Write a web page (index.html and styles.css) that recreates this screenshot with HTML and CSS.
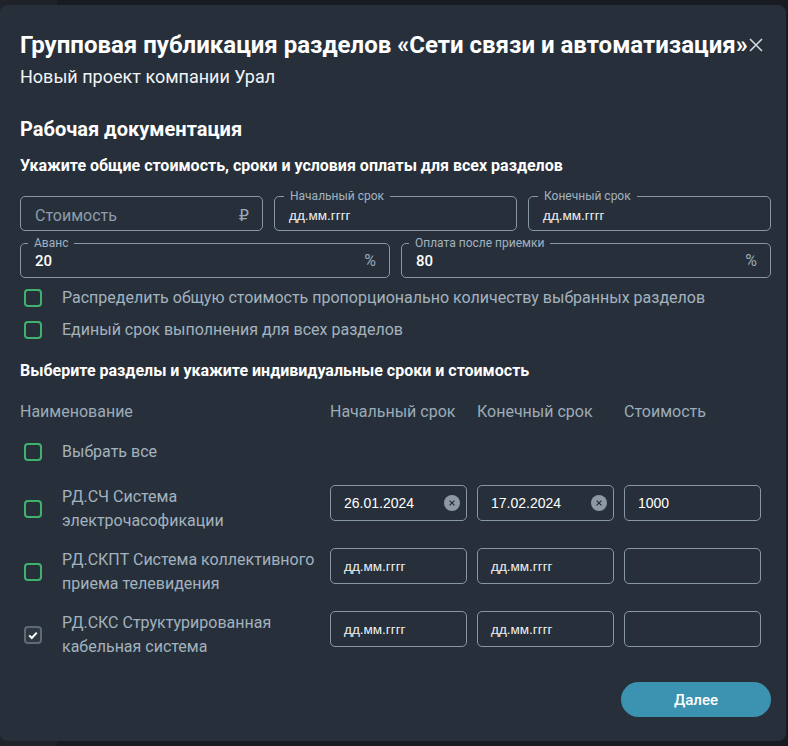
FILE: index.html
```html
<!DOCTYPE html>
<html lang="ru">
<head>
<meta charset="utf-8">
<title>Групповая публикация</title>
<link rel="stylesheet" href="styles.css">
</head>
<body>
<div class="modal">
  <div class="head">
    <h1 class="title">Групповая публикация разделов «Сети связи и автоматизация»</h1>
    <button class="close" aria-label="Закрыть">
      <svg width="14" height="14" viewBox="0 0 14 14"><path d="M1 1 L13 13 M13 1 L1 13" stroke="#d3d9de" stroke-width="1.6" fill="none"/></svg>
    </button>
  </div>
  <p class="subtitle">Новый проект компании Урал</p>
  <h2 class="section">Рабочая документация</h2>
  <h3 class="hint">Укажите общие стоимость, сроки и условия оплаты для всех разделов</h3>

  <div class="fields">
    <div class="row3">
      <div class="field"><span class="ph">Стоимость</span><span class="suffix rub">₽</span></div>
      <div class="field"><span class="legend">Начальный срок</span><span class="date">дд.мм.гггг</span></div>
      <div class="field"><span class="legend">Конечный срок</span><span class="date">дд.мм.гггг</span></div>
    </div>
    <div class="row2">
      <div class="field"><span class="legend">Аванс</span><span class="val">20</span><span class="suffix">%</span></div>
      <div class="field"><span class="legend">Оплата после приемки</span><span class="val">80</span><span class="suffix">%</span></div>
    </div>
  </div>

  <div class="options">
    <label class="opt"><span class="cb"></span><span>Распределить общую стоимость пропорционально количеству выбранных разделов</span></label>
    <label class="opt"><span class="cb"></span><span>Единый срок выполнения для всех разделов</span></label>
  </div>

  <h3 class="hint hint2">Выберите разделы и укажите индивидуальные сроки и стоимость</h3>

  <div class="table">
    <div class="trow thead">
      <div>Наименование</div>
      <div>Начальный срок</div>
      <div>Конечный срок</div>
      <div>Стоимость</div>
    </div>
    <div class="trow tall">
      <div class="name"><span class="cb"></span><span>Выбрать все</span></div>
    </div>
    <div class="trow titem first">
      <div class="name"><span class="cb"></span><span class="ntext">РД.СЧ Система<br>электрочасофикации</span></div>
      <div class="inp"><span class="v">26.01.2024</span><span class="clr"><svg width="16" height="16" viewBox="0 0 16 16"><circle cx="8" cy="8" r="8" fill="#8c99a4"/><path d="M5.6 5.6 L10.4 10.4 M10.4 5.6 L5.6 10.4" stroke="#27303a" stroke-width="1.3"/></svg></span></div>
      <div class="inp"><span class="v">17.02.2024</span><span class="clr"><svg width="16" height="16" viewBox="0 0 16 16"><circle cx="8" cy="8" r="8" fill="#8c99a4"/><path d="M5.6 5.6 L10.4 10.4 M10.4 5.6 L5.6 10.4" stroke="#27303a" stroke-width="1.3"/></svg></span></div>
      <div class="inp"><span class="v">1000</span></div>
    </div>
    <div class="trow titem">
      <div class="name"><span class="cb"></span><span class="ntext">РД.СКПТ Система коллективного<br>приема телевидения</span></div>
      <div class="inp"><span class="d">дд.мм.гггг</span></div>
      <div class="inp"><span class="d">дд.мм.гггг</span></div>
      <div class="inp"></div>
    </div>
    <div class="trow titem">
      <div class="name"><span class="cb checked"><svg width="14" height="14" viewBox="0 0 14 14"><path d="M3.2 7.4 L5.8 10 L10.8 4.6" stroke="#ffffff" stroke-width="2" fill="none"/></svg></span><span class="ntext">РД.СКС Структурированная<br>кабельная система</span></div>
      <div class="inp"><span class="d">дд.мм.гггг</span></div>
      <div class="inp"><span class="d">дд.мм.гггг</span></div>
      <div class="inp"></div>
    </div>
  </div>

  <div class="footer">
    <button class="next">Далее</button>
  </div>
</div>
</body>
</html>
```

FILE: styles.css
```css
* { box-sizing: border-box; }

body {
  margin: 0;
  background: linear-gradient(to right, #1f2329 0, #1f2329 57px, #181c22 57px);
  font-family: Roboto, "Liberation Sans", sans-serif;
  height: 746px;
  overflow: hidden;
}

.modal {
  margin-top: 5px;
  width: 786px;
  height: 736px;
  background: #27303a;
  border-radius: 8px;
  padding: 26px 15px 0 20px;
  color: #ffffff;
}

.head {
  display: flex;
  align-items: center;
}

.title {
  margin: 0;
  font-size: 24px;
  line-height: 28px;
  font-weight: 700;
  white-space: nowrap;
  letter-spacing: 0;
}

.close {
  border: 0;
  background: none;
  padding: 0;
  margin-left: 1px;
  width: 14px;
  height: 14px;
  display: flex;
  cursor: pointer;
}

.subtitle {
  margin: 7px 0 0;
  font-size: 18px;
  line-height: 22px;
  color: #f2f4f6;
}

.section {
  margin: 29px 0 0;
  font-size: 20px;
  line-height: 24px;
  font-weight: 700;
}

.hint {
  margin: 15px 0 0;
  font-size: 16px;
  line-height: 20px;
  font-weight: 700;
}

.hint2 { margin-top: 19px; }

.fields {
  margin-top: 20px;
  display: flex;
  flex-direction: column;
  gap: 12px;
}

.row3 {
  display: grid;
  grid-template-columns: 243px 243px 243px;
  column-gap: 11px;
}

.row2 {
  display: grid;
  grid-template-columns: 370px 370px;
  column-gap: 11px;
}

.field {
  position: relative;
  height: 35px;
  border: 1px solid #8797a6;
  border-radius: 5px;
  display: flex;
  align-items: center;
  padding: 0 13px 0 14px;
}

.row3 .field { padding-top: 3px; }

.legend {
  position: absolute;
  top: -8px;
  left: 9px;
  padding: 0 6px;
  background: #27303a;
  font-size: 12px;
  line-height: 14px;
  color: #a2b2c1;
}

.row2 .legend { left: 7px; }

.ph {
  font-size: 16px;
  color: #8e9cab;
}

.date {
  font-family: "Liberation Sans", Arial, sans-serif;
  font-size: 13.5px;
  color: #eef1f3;
}

.val {
  font-size: 15px;
  font-weight: 500;
  color: #ffffff;
}

.suffix {
  margin-left: auto;
  font-size: 16px;
  color: #9aa8b5;
}

.rub {
  font-family: "DejaVu Sans", sans-serif;
  font-size: 16px;
}

.options {
  margin-top: 8px;
  display: flex;
  flex-direction: column;
  gap: 8px;
}

.opt {
  display: flex;
  align-items: center;
  gap: 20px;
  font-size: 16px;
  line-height: 24px;
  color: #a3b2bf;
}

.cb {
  flex: none;
  width: 18px;
  height: 18px;
  margin-left: 4px;
  border: 2px solid #3fb26d;
  border-radius: 4px;
  display: flex;
  align-items: center;
  justify-content: center;
}

.cb.checked {
  border-color: #5e6a75;
  background: #2e3841;
}

.table {
  margin-top: 19px;
}

.trow {
  display: grid;
  grid-template-columns: 300px 137px 137px 137px;
  column-gap: 10px;
  align-items: start;
}

.thead {
  font-size: 16px;
  line-height: 24px;
  color: #9cabb8;
}

.tall { margin-top: 16px; }

.titem { margin-top: 15px; }
.titem.first { margin-top: 21px; }

.name {
  display: flex;
  align-items: center;
  gap: 20px;
  font-size: 16px;
  line-height: 24px;
  color: #a3b2bf;
}

.ntext { white-space: nowrap; }

.inp {
  height: 36px;
  border: 1px solid #8797a6;
  border-radius: 5px;
  display: flex;
  align-items: center;
  justify-content: space-between;
  padding: 0 6px 0 13px;
  font-family: "Liberation Sans", Arial, sans-serif;
}

.v {
  font-size: 14px;
  color: #ffffff;
}

.d {
  font-size: 13.5px;
  color: #eef1f3;
}

.clr {
  display: flex;
  width: 16px;
  height: 16px;
}

.footer {
  margin-top: 23px;
  display: flex;
  justify-content: flex-end;
}

.next {
  width: 150px;
  height: 35px;
  border: 0;
  border-radius: 18px;
  background: #3b93b1;
  color: #ffffff;
  font-family: Roboto, "Liberation Sans", sans-serif;
  font-size: 15px;
  font-weight: 500;
  cursor: pointer;
}
```
